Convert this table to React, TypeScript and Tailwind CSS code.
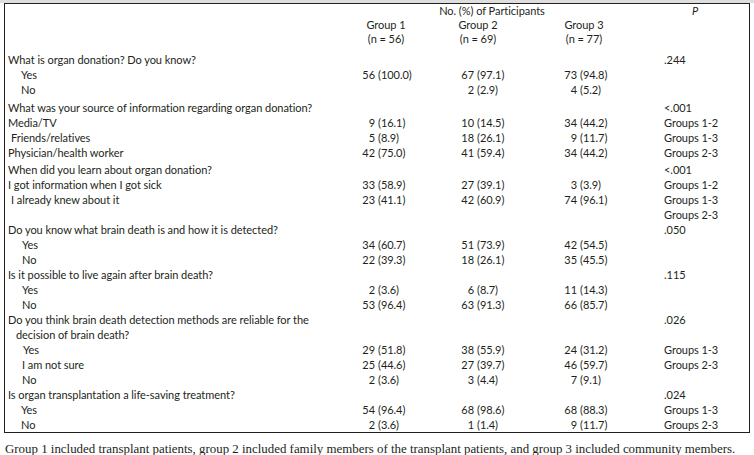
import React from "react";

type RowData = {
  label?: string;
  indent?: number;
  a?: string;
  b?: string;
  c?: string;
  p?: string;
  mt?: number;
};

const rows: RowData[] = [
  { label: "What is organ donation? Do you know?", p: ".244", mt: 6 },
  { label: "Yes", indent: 13, a: "56 (100.0)", b: "67 (97.1)", c: "73 (94.8)" },
  { label: "No", indent: 13, b: "2 (2.9)", c: "4 (5.2)" },
  { label: "What was your source of information regarding organ donation?", p: "<.001", mt: 3 },
  { label: "Media/TV", a: "9 (16.1)", b: "10 (14.5)", c: "34 (44.2)", p: "Groups 1-2" },
  { label: "Friends/relatives", indent: 3, a: "5 (8.9)", b: "18 (26.1)", c: "9 (11.7)", p: "Groups 1-3" },
  { label: "Physician/health worker", a: "42 (75.0)", b: "41 (59.4)", c: "34 (44.2)", p: "Groups 2-3" },
  { label: "When did you learn about organ donation?", p: "<.001", mt: 2 },
  { label: "I got information when I got sick", a: "33 (58.9)", b: "27 (39.1)", c: "3 (3.9)", p: "Groups 1-2" },
  { label: "I already knew about it", indent: 3, a: "23 (41.1)", b: "42 (60.9)", c: "74 (96.1)", p: "Groups 1-3" },
  { p: "Groups 2-3" },
  { label: "Do you know what brain death is and how it is detected?", p: ".050" },
  { label: "Yes", indent: 14, a: "34 (60.7)", b: "51 (73.9)", c: "42 (54.5)" },
  { label: "No", indent: 14, a: "22 (39.3)", b: "18 (26.1)", c: "35 (45.5)" },
  { label: "Is it possible to live again after brain death?", p: ".115" },
  { label: "Yes", indent: 14, a: "2 (3.6)", b: "6 (8.7)", c: "11 (14.3)" },
  { label: "No", indent: 14, a: "53 (96.4)", b: "63 (91.3)", c: "66 (85.7)" },
  { label: "Do you think brain death detection methods are reliable for the", p: ".026" },
  { label: "decision of brain death?", indent: 8 },
  { label: "Yes", indent: 15, a: "29 (51.8)", b: "38 (55.9)", c: "24 (31.2)", p: "Groups 1-3" },
  { label: "I am not sure", indent: 14, a: "25 (44.6)", b: "27 (39.7)", c: "46 (59.7)", p: "Groups 2-3" },
  { label: "No", indent: 14, a: "2 (3.6)", b: "3 (4.4)", c: "7 (9.1)" },
  { label: "Is organ transplantation a life-saving treatment?", p: ".024" },
  { label: "Yes", indent: 13, a: "54 (96.4)", b: "68 (98.6)", c: "68 (88.3)", p: "Groups 1-3" },
  { label: "No", indent: 13, a: "2 (3.6)", b: "1 (1.4)", c: "9 (11.7)", p: "Groups 2-3" },
];

function Val({ v, numW, cellW }: { v?: string; numW: number; cellW: number }) {
  const i = v ? v.indexOf(" ") : -1;
  const num = v && i > 0 ? v.slice(0, i) : "";
  const pct = v && i > 0 ? v.slice(i + 1) : "";
  return (
    <div className="flex shrink-0" style={{ width: cellW }}>
      {v && (
        <>
          <span className="text-right" style={{ width: numW }}>{num}</span>
          <span className="ml-[3px]">{pct}</span>
        </>
      )}
    </div>
  );
}

export default function App() {
  return (
    <div className="w-[754px] h-[455px] bg-white text-[#231f20] overflow-hidden">
      <div className="h-[3px] bg-[#dedede]" />
      <div
        className="ml-[4px] w-[746px] border border-[#231f20] text-[11px] leading-[15px] tracking-[-0.05px]"
        style={{ fontFamily: "Lato, 'Open Sans', sans-serif" }}
      >
        <div className="flex h-[14px] leading-[14px]">
          <div className="w-[335px] shrink-0" />
          <div className="w-[304px] shrink-0 text-center">No. (%) of Participants</div>
          <div className="pl-[48px] italic">P</div>
        </div>
        <div className="flex h-[14px] leading-[14px]">
          <div className="w-[335px] shrink-0" />
          <div className="w-[92px] shrink-0 text-center">Group 1</div>
          <div className="w-[92px] shrink-0 text-center">Group 2</div>
          <div className="w-[120px] shrink-0 text-center">Group 3</div>
        </div>
        <div className="flex h-[14px] leading-[14px]">
          <div className="w-[335px] shrink-0" />
          <div className="w-[92px] shrink-0 text-center">(n = 56)</div>
          <div className="w-[92px] shrink-0 text-center">(n = 69)</div>
          <div className="w-[120px] shrink-0 text-center">(n = 77)</div>
        </div>
        {rows.map((r, idx) => (
          <div key={idx} className="flex h-[15px] whitespace-nowrap" style={{ marginTop: r.mt ?? 0 }}>
            <div className="w-[335px] shrink-0" style={{ paddingLeft: 3 + (r.indent ?? 0) }}>
              {r.label}
            </div>
            <Val v={r.a} numW={35} cellW={100} />
            <Val v={r.b} numW={34} cellW={100} />
            <Val v={r.c} numW={37} cellW={104} />
            <div className="pl-[20px]">{r.p}</div>
          </div>
        ))}
      </div>
      <p
        className="pl-[5px] pt-[8px] text-[12.9px] leading-[16px] whitespace-nowrap"
        style={{ fontFamily: "'Liberation Serif', serif" }}
      >
        Group 1 included transplant patients, group 2 included family members of the transplant patients, and group 3 included community members.
      </p>
    </div>
  );
}
